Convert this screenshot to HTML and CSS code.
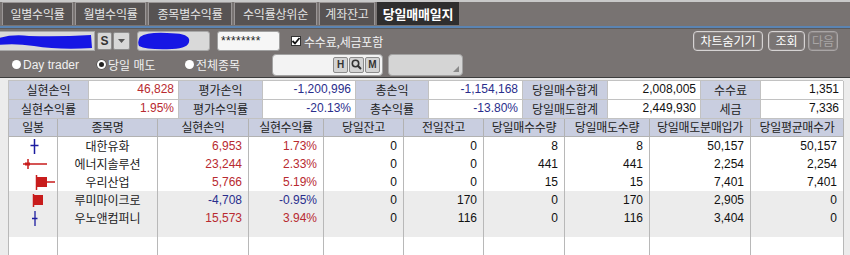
FILE: index.html
```html
<!DOCTYPE html>
<html lang="ko">
<head>
<meta charset="utf-8">
<link rel="stylesheet" href="styles.css">
</head>
<body>
<div class="tabbar">
  <div class="tab t1">일별수익률</div>
  <div class="tab t2">월별수익률</div>
  <div class="tab t3">종목별수익률</div>
  <div class="tab t4">수익률상위순</div>
  <div class="tab t5">계좌잔고</div>
  <div class="tab t6 active">당일매매일지</div>
</div>
<div class="bar2">
  <div class="field f1"><svg width="93" height="20" viewBox="0 0 93 20"><path d="M0 7 Q 14 3 30 5 Q 60 6 92 4 L 93 17 Q 60 19 35 15 Q 15 12 0 14 Z" fill="#1616e4"/></svg></div>
  <div class="sbtn">S</div>
  <div class="dd"><svg width="9" height="6" viewBox="0 0 9 6"><path d="M1 1 L8 1 L4.5 5 Z" fill="#555"/></svg></div>
  <div class="field f2"><svg width="73" height="20" viewBox="0 0 73 20"><path d="M3 6 Q 10 1 30 2 Q 50 2 52 8 Q 54 17 35 18 Q 10 19 2 15 Q 0 10 3 6 Z" fill="#1616e4"/></svg></div>
  <div class="pwd">********</div>
  <div class="chk"><span class="box"><svg width="10" height="10" viewBox="0 0 10 10"><path d="M1.5 5 L4 7.5 L8.5 2" fill="none" stroke="#111" stroke-width="1.8"/></svg></span>수수료,세금포함</div>
  <div class="spacer"></div>
  <div class="btn b1">차트숨기기</div>
  <div class="btn b2">조회</div>
  <div class="btn b3 dis">다음</div>
</div>
<div class="bar3">
  <div class="radio r1"><i class="rc"></i><span class="lat">Day trader</span></div>
  <div class="radio r2"><i class="rc on"></i>당일 매도</div>
  <div class="radio r3"><i class="rc"></i>전체종목</div>
  <div class="search">
    <span class="sb">H</span>
    <span class="sb"><svg width="11" height="11" viewBox="0 0 11 11"><circle cx="4.5" cy="4.5" r="3.2" fill="none" stroke="#333" stroke-width="1.6"/><path d="M6.8 6.8 L10 10" stroke="#333" stroke-width="2"/></svg></span>
    <span class="sb">M</span>
  </div>
  <div class="combo"><svg width="6" height="6" viewBox="0 0 6 6"><path d="M6 0 L6 6 L0 6 Z" fill="#8a8a8a"/></svg></div>
</div>
<div class="panel">
  <div class="sum">
    <div class="lb">실현손익</div><div class="v red">46,828</div>
    <div class="lb">평가손익</div><div class="v blue">-1,200,996</div>
    <div class="lb">총손익</div><div class="v blue">-1,154,168</div>
    <div class="lb">당일매수합계</div><div class="v">2,008,005</div>
    <div class="lb">수수료</div><div class="v">1,351</div>
    <div class="lb">실현수익률</div><div class="v red">1.95%</div>
    <div class="lb">평가수익률</div><div class="v blue">-20.13%</div>
    <div class="lb">총수익률</div><div class="v blue">-13.80%</div>
    <div class="lb">당일매도합계</div><div class="v">2,449,930</div>
    <div class="lb">세금</div><div class="v">7,336</div>
  </div>
  <div class="grid">
    <div class="hd">일봉</div><div class="hd">종목명</div><div class="hd">실현손익</div><div class="hd">실현수익률</div><div class="hd">당일잔고</div><div class="hd">전일잔고</div><div class="hd">당일매수수량</div><div class="hd">당일매도수량</div><div class="hd">당일매도분매입가</div><div class="hd">당일평균매수가</div>

    <div class="c ic"><svg width="49" height="18" viewBox="0 0 49 18"><path d="M26.5 2 V17 M22.5 8.5 H30.5" stroke="#1c1ca0" stroke-width="1.5" fill="none"/></svg></div>
    <div class="c nm">대한유화</div><div class="c n red">6,953</div><div class="c n red">1.73%</div><div class="c n">0</div><div class="c n">0</div><div class="c n">8</div><div class="c n">8</div><div class="c n">50,157</div><div class="c n">50,157</div>

    <div class="c ic"><svg width="49" height="18" viewBox="0 0 49 18"><path d="M15 9 H39 M20 4 V14" stroke="#c81c1c" stroke-width="1.5" fill="none"/><rect x="17" y="7.5" width="5" height="3" fill="#c81c1c"/></svg></div>
    <div class="c nm">에너지솔루션</div><div class="c n red">23,244</div><div class="c n red">2.33%</div><div class="c n">0</div><div class="c n">0</div><div class="c n">441</div><div class="c n">441</div><div class="c n">2,254</div><div class="c n">2,254</div>

    <div class="c ic"><svg width="49" height="18" viewBox="0 0 49 18"><path d="M28.5 2 V17 M38 9 H47" stroke="#c81c1c" stroke-width="1.5" fill="none"/><rect x="29" y="4" width="10" height="10" fill="#c81c1c"/></svg></div>
    <div class="c nm">우리산업</div><div class="c n red">5,766</div><div class="c n red">5.19%</div><div class="c n">0</div><div class="c n">0</div><div class="c n">15</div><div class="c n">15</div><div class="c n">7,401</div><div class="c n">7,401</div>

    <div class="c ic g"><svg width="49" height="18" viewBox="0 0 49 18"><path d="M25.5 3 V16" stroke="#c81c1c" stroke-width="1.5" fill="none"/><rect x="25" y="4" width="10" height="10" fill="#c81c1c"/></svg></div>
    <div class="c nm g">루미마이크로</div><div class="c n g blue">-4,708</div><div class="c n g blue">-0.95%</div><div class="c n g">0</div><div class="c n g">170</div><div class="c n g">0</div><div class="c n g">170</div><div class="c n g">2,905</div><div class="c n g">0</div>

    <div class="c ic g"><svg width="49" height="18" viewBox="0 0 49 18"><path d="M27 2 V17 M24 9.5 H29.5" stroke="#1c1ca0" stroke-width="1.3" fill="none"/></svg></div>
    <div class="c nm g">우노앤컴퍼니</div><div class="c n g red">15,573</div><div class="c n g red">3.94%</div><div class="c n g">0</div><div class="c n g">116</div><div class="c n g">0</div><div class="c n g">116</div><div class="c n g">3,404</div><div class="c n g">0</div>

    <div class="c g f"></div><div class="c g f"></div><div class="c g f"></div><div class="c g f"></div><div class="c g f"></div><div class="c g f"></div><div class="c g f"></div><div class="c g f"></div><div class="c g f"></div><div class="c g f"></div>
    <div class="c e"></div><div class="c e"></div><div class="c e"></div><div class="c e"></div><div class="c e"></div><div class="c e"></div><div class="c e"></div><div class="c e"></div><div class="c e"></div><div class="c e"></div>
  </div>
</div>
</body>
</html>
```
FILE: styles.css
```css
* { box-sizing: border-box; }
body {
  margin: 0;
  width: 850px;
  height: 255px;
  overflow: hidden;
  background: #787372;
  font-family: "Noto Sans CJK KR", sans-serif;
  font-size: 12px;
  color: #111;
}
.tabbar {
  height: 28px;
  border-top: 2px solid #c9c9c9;
  border-bottom: 2px solid #5b84b2;
  display: flex;
  align-items: flex-start;
  gap: 2px;
  padding-left: 2px;
}
.tab {
  height: 23px;
  border: 1px solid #9a9696;
  border-bottom: none;
  background: #575353;
  color: #e4e4e4;
  line-height: 21px;
  text-align: center;
  white-space: nowrap;
  letter-spacing: -0.2px;
}
.t1 { width: 71px; }
.t2 { width: 71px; }
.t3 { width: 84px; }
.t4 { width: 83px; }
.t5 { width: 56px; }
.t6 { width: 82px; }
.tab.active {
  background: #2f2e2e;
  color: #fff;
  font-weight: bold;
  font-size: 13px;
  border-color: #2f2e2e;
}
.bar2 {
  height: 24px;
  display: flex;
  align-items: center;
  padding: 1px 12px 0 0;
  border-top: 1px solid #5c5a5a;
}
.field {
  height: 20px;
  background: #d9d9d9;
  border: 1px solid #a8a8a8;
  overflow: hidden;
}
.field svg { display: block; margin: -1px; }
.f1 { width: 95px; border-left: none; }
.f2 { width: 73px; margin-left: 7px; border-radius: 3px; }
.sbtn, .dd {
  height: 18px;
  background: #d7d7d7;
  border: 1px solid #8e8e8e;
  border-radius: 2px;
  display: flex;
  align-items: center;
  justify-content: center;
  font-family: "Liberation Sans", sans-serif;
  font-weight: bold;
  font-size: 12px;
  color: #333;
}
.sbtn { width: 15px; margin-left: 2px; }
.dd { width: 17px; margin-left: 1px; }
.pwd {
  width: 63px;
  height: 20px;
  margin-left: 7px;
  background: #f6f6f6;
  border: 1px solid #a0a0a0;
  border-radius: 3px;
  font-family: "Liberation Sans", sans-serif;
  font-size: 12px;
  line-height: 18px;
  padding-left: 3px;
  color: #222;
  letter-spacing: 0.3px;
}
.chk {
  display: flex;
  align-items: center;
  margin-left: 11px;
  color: #f2f2f2;
  letter-spacing: -0.2px;
}
.box {
  width: 10px;
  height: 10px;
  background: #fff;
  border: 1px solid #333;
  margin-right: 3px;
  display: flex;
}
.box svg { margin: -1px; }
.spacer { flex: 1; }
.btn {
  height: 20px;
  border: 1px solid #d6d3d3;
  border-radius: 4px;
  color: #fff;
  line-height: 17px;
  text-align: center;
  background: #7a7574;
  box-shadow: inset 0 0 0 1px #8c8787;
}
.b1 { width: 70px; }
.b2 { width: 37px; margin-left: 5px; }
.b3 { width: 30px; margin-left: 3px; }
.btn.dis { color: #a9a6a6; border-color: #aaa6a6; }
.bar3 {
  height: 25px;
  display: flex;
  align-items: center;
  padding-left: 12px;
}
.radio {
  display: flex;
  align-items: center;
  color: #f0f0f0;
}
.lat { font-family: "Liberation Sans", sans-serif; font-size: 12px; }
.r1 { width: 85px; }
.r2 { width: 88px; }
.r3 { width: 87px; }
.rc {
  width: 9px;
  height: 9px;
  border-radius: 50%;
  background: #fff;
  margin-right: 2px;
  position: relative;
}
.rc.on { border: 2px solid #fff; background: #222; box-shadow: 0 0 0 0.5px #444; }
.search {
  width: 111px;
  height: 22px;
  background: #f3f3f3;
  border: 1px solid #a2a2a2;
  border-radius: 4px;
  display: flex;
  align-items: center;
  justify-content: flex-end;
  gap: 1px;
  padding-right: 2px;
}
.sb {
  width: 15px;
  height: 16px;
  background: #d4d4d4;
  border: 1px solid #8c8c8c;
  border-radius: 2px;
  font-family: "Liberation Sans", sans-serif;
  font-weight: bold;
  font-size: 10px;
  color: #333;
  display: flex;
  align-items: center;
  justify-content: center;
}
.combo {
  width: 75px;
  height: 22px;
  margin-left: 5px;
  background: #d5d5d5;
  border: 1px solid #a2a2a2;
  border-radius: 4px;
  display: flex;
  align-items: flex-end;
  justify-content: flex-end;
  padding: 0 3px 3px 0;
}
.panel {
  height: 178px;
  border-top: 1px solid #3d3d3d;
  background: #ececec;
  padding: 2px 7px 0 8px;
  overflow: hidden;
}
.sum {
  display: grid;
  grid-template-columns: 80px 90px 84px 93px 73px 94px 85px 93px 60px 83px;
  grid-auto-rows: 19px;
  border-top: 1px solid #c2c2c2;
  border-left: 1px solid #c2c2c2;
}
.sum > div {
  border-right: 1px solid #c2c2c2;
  border-bottom: 1px solid #c2c2c2;
  line-height: 17px;
  white-space: nowrap;
}
.lb {
  background: #c9cee0;
  text-align: center;
  color: #222;
}
.v {
  background: #fff;
  text-align: right;
  padding-right: 4px;
  font-family: "Liberation Sans", sans-serif;
  font-size: 12px;
}
.red { color: #b82a30; }
.blue { color: #2a2e8c; }
.grid {
  display: grid;
  grid-template-columns: 49px 100px 91px 75px 80px 80px 81px 85px 101px 93px;
  grid-template-rows: 18px repeat(5, 18px) 10px 30px;
  border-left: 1px solid #b8b8b8;
}
.hd {
  background: #c9cee0;
  border-right: 1px solid #b2b2b2;
  border-bottom: 1px solid #b2b2b2;
  text-align: center;
  line-height: 16px;
  color: #222;
  white-space: nowrap;
  letter-spacing: -0.3px;
}
.c {
  background: #fff;
  border-right: 1px solid #b8b8b8;
  line-height: 18px;
  white-space: nowrap;
}
.c.g { background: #ececec; }
.ic svg { display: block; margin-left: -1px; }
.nm { text-align: center; color: #222; }
.n {
  text-align: right;
  padding-right: 6px;
  font-family: "Liberation Sans", sans-serif;
  font-size: 12px;
}
```
